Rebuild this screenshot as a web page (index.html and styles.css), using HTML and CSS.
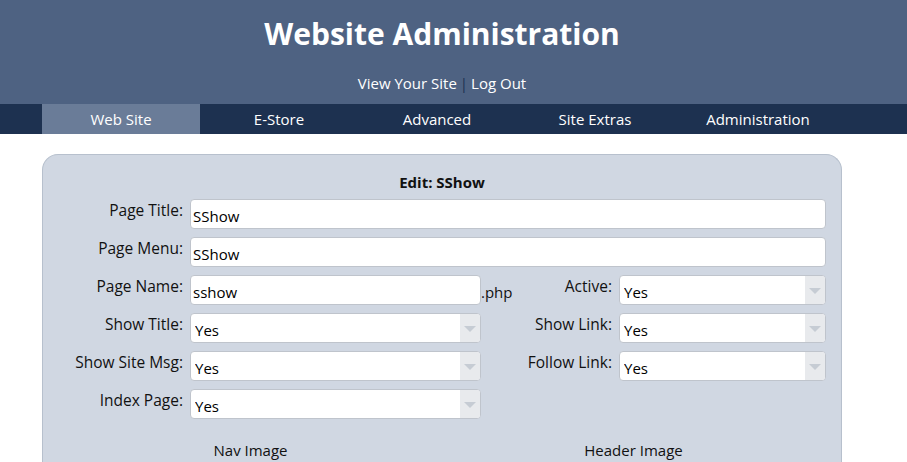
FILE: index.html
```html
<!DOCTYPE html>
<html>
<head>
<meta charset="utf-8">
<link rel="stylesheet" href="styles.css">
</head>
<body>
<header class="top">
  <div class="wrap">
    <h1 class="site-title">Website Administration</h1>
    <div class="top-links"><a href="#">View Your Site</a><span class="sep">|</span><a href="#">Log Out</a></div>
  </div>
</header>
<nav class="navbar">
  <div class="wrap tabs">
    <a class="tab active" href="#">Web Site</a>
    <a class="tab" href="#">E-Store</a>
    <a class="tab" href="#">Advanced</a>
    <a class="tab" href="#">Site Extras</a>
    <a class="tab" href="#">Administration</a>
  </div>
</nav>
<main class="wrap">
  <section class="panel">
    <h2 class="panel-title">Edit: SShow</h2>
    <div class="form">
      <label class="lbl">Page Title:</label>
      <input class="field span3" type="text" value="SShow">

      <label class="lbl">Page Menu:</label>
      <input class="field span3" type="text" value="SShow">

      <label class="lbl">Page Name:</label>
      <input class="field" type="text" value="sshow">
      <div class="mid"><span class="ext">.php</span><label class="lbl">Active:</label></div>
      <span class="sel"><select><option>Yes</option><option>No</option></select></span>

      <label class="lbl">Show Title:</label>
      <span class="sel"><select><option>Yes</option><option>No</option></select></span>
      <div class="mid"><label class="lbl">Show Link:</label></div>
      <span class="sel"><select><option>Yes</option><option>No</option></select></span>

      <label class="lbl">Show Site Msg:</label>
      <span class="sel"><select><option>Yes</option><option>No</option></select></span>
      <div class="mid"><label class="lbl">Follow Link:</label></div>
      <span class="sel"><select><option>Yes</option><option>No</option></select></span>

      <label class="lbl">Index Page:</label>
      <span class="sel"><select><option>Yes</option><option>No</option></select></span>
    </div>
    <div class="images">
      <div class="img-col">Nav Image</div>
      <div class="img-col">Header Image</div>
    </div>
  </section>
</main>
</body>
</html>
```
FILE: styles.css
```css
* { box-sizing: border-box; }
html, body { margin: 0; padding: 0; }
body {
  font-family: "Open Sans", "Noto Sans", sans-serif;
  background: #ffffff;
  color: #111111;
  font-size: 14px;
}
.wrap {
  width: 800px;
  margin-left: 42px;
}
.top {
  background: #4e6282;
  height: 104px;
  padding-top: 12px;
}
.site-title {
  margin: 0;
  text-align: center;
  color: #ffffff;
  font-size: 30px;
  font-weight: 700;
  line-height: 44px;
}
.top-links {
  margin-top: 15px;
  text-align: center;
  font-size: 15px;
  line-height: 24px;
}
.top-links a { color: #ffffff; text-decoration: none; }
.sep { color: #1d3150; margin: 0 3px; }
.navbar {
  background: #1d3150;
  height: 30px;
}
.tabs {
  display: grid;
  grid-template-columns: 158px 158px 158px 158px 168px;
  height: 30px;
}
.tab {
  color: #ffffff;
  text-decoration: none;
  text-align: center;
  line-height: 30px;
  font-size: 15px;
}
.tab.active { background: #6a7c98; }
.panel {
  margin-top: 20px;
  background: #d0d7e2;
  border: 1px solid #b7c0cd;
  border-radius: 16px 16px 0 0;
  border-bottom: none;
  height: 320px;
}
.panel-title {
  margin: 16px 0 0;
  text-align: center;
  font-size: 15px;
  font-weight: 700;
  line-height: 22px;
}
.form {
  margin-top: 6px;
  display: grid;
  grid-template-columns: 140px 291px 124px 207px;
  column-gap: 7px;
  row-gap: 8px;
  padding-right: 15px;
  grid-auto-rows: 30px;
}
.lbl {
  text-align: right;
  font-size: 15.5px;
  line-height: 20px;
  padding-top: 1px;
  white-space: nowrap;
}
.field {
  height: 30px;
  border: 1px solid #bfc4cc;
  border-radius: 4px;
  background: #fff;
  font-family: inherit;
  font-size: 15px;
  padding: 4px 2px 0;
  color: #000;
  margin: 0;
  width: 100%;
}
.span3 { grid-column: 2 / 5; }
.mid {
  display: flex;
  justify-content: space-between;
}
.ext {
  margin-left: -7px;
  font-size: 15px;
  line-height: 20px;
  padding-top: 7px;
}
.mid .lbl { margin-left: auto; }
.sel {
  position: relative;
  display: block;
  height: 30px;
}
.sel select {
  appearance: none;
  -webkit-appearance: none;
  width: 100%;
  height: 30px;
  border: 1px solid #bfc4cc;
  border-radius: 4px;
  background: #fff;
  font-family: inherit;
  font-size: 15px;
  color: #000;
  padding: 4px 0 0 4px;
  margin: 0;
}
.sel::before {
  content: "";
  position: absolute;
  right: 1px;
  top: 1px;
  bottom: 1px;
  width: 20px;
  background: #e8eaed;
  border-radius: 0 3px 3px 0;
  pointer-events: none;
}
.sel::after {
  content: "";
  position: absolute;
  right: 5px;
  top: 13px;
  border-left: 6px solid transparent;
  border-right: 6px solid transparent;
  border-top: 6px solid #c6ccd4;
  pointer-events: none;
}
.images {
  display: grid;
  grid-template-columns: 383px 383px;
  padding-left: 16px;
  margin-top: 20px;
}
.img-col {
  text-align: center;
  font-size: 15px;
  line-height: 22px;
}
```
